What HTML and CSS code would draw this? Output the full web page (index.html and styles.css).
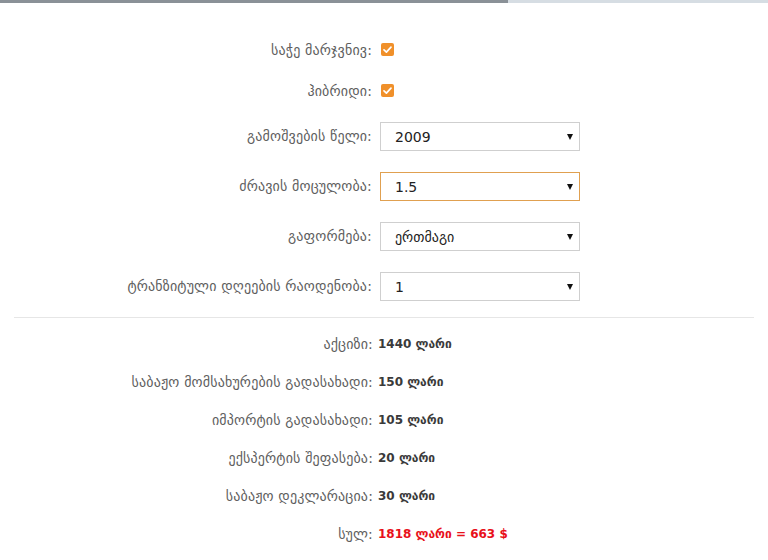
FILE: index.html
```html
<!DOCTYPE html>
<html lang="ka">
<head>
<meta charset="utf-8">
<link rel="stylesheet" href="styles.css">
</head>
<body>
<div class="topbar"><div class="topbar-fill"></div></div>
<div class="form">
  <div class="row row-check">
    <span class="label">საჭე მარჯვნივ:</span>
    <span class="check"><svg width="13" height="13" viewBox="0 0 13 13"><rect width="13" height="13" rx="2" fill="#f0902a"/><path d="M3 6.8 L5.4 9.1 L10 4.2" fill="none" stroke="#fff" stroke-width="1.7" stroke-linecap="round" stroke-linejoin="round"/></svg></span>
  </div>
  <div class="row row-check">
    <span class="label">ჰიბრიდი:</span>
    <span class="check"><svg width="13" height="13" viewBox="0 0 13 13"><rect width="13" height="13" rx="2" fill="#f0902a"/><path d="M3 6.8 L5.4 9.1 L10 4.2" fill="none" stroke="#fff" stroke-width="1.7" stroke-linecap="round" stroke-linejoin="round"/></svg></span>
  </div>
  <div class="row row-select">
    <span class="label">გამოშვების წელი:</span>
    <div class="select"><span>2009</span><i class="arrow"></i></div>
  </div>
  <div class="row row-select">
    <span class="label">ძრავის მოცულობა:</span>
    <div class="select focused"><span>1.5</span><i class="arrow"></i></div>
  </div>
  <div class="row row-select">
    <span class="label">გაფორმება:</span>
    <div class="select"><span>ერთმაგი</span><i class="arrow"></i></div>
  </div>
  <div class="row row-select">
    <span class="label">ტრანზიტული დღეების რაოდენობა:</span>
    <div class="select"><span>1</span><i class="arrow"></i></div>
  </div>
</div>
<hr class="divider">
<div class="results">
  <div class="row row-result"><span class="label rlabel">აქციზი:</span><span class="value">1440 ლარი</span></div>
  <div class="row row-result"><span class="label rlabel">საბაჟო მომსახურების გადასახადი:</span><span class="value">150 ლარი</span></div>
  <div class="row row-result"><span class="label rlabel">იმპორტის გადასახადი:</span><span class="value">105 ლარი</span></div>
  <div class="row row-result"><span class="label rlabel">ექსპერტის შეფასება:</span><span class="value">20 ლარი</span></div>
  <div class="row row-result"><span class="label rlabel">საბაჟო დეკლარაცია:</span><span class="value">30 ლარი</span></div>
  <div class="row row-result"><span class="label rlabel">სულ:</span><span class="value total">1818 ლარი = 663 $</span></div>
</div>
</body>
</html>
```

FILE: styles.css
```css
html, body {
  margin: 0;
  padding: 0;
  background: #fff;
}
body {
  font-family: "DejaVu Sans", "Noto Sans", sans-serif;
  font-size: 14px;
  color: #555;
}
.topbar {
  height: 3px;
  background: #d6dde3;
}
.topbar-fill {
  width: 508px;
  height: 3px;
  background: #8a9197;
}
.form {
  padding-top: 26px;
}
.row {
  display: flex;
  align-items: center;
}
.label {
  width: 372px;
  text-align: right;
  flex: none;
  color: #5e5e5e;
  letter-spacing: 0.15px;
}
.row-check {
  height: 41px;
}
.check {
  margin-left: 9px;
  display: flex;
}
.row-select {
  height: 50px;
}
.select {
  margin-left: 8px;
  border: 1px solid #cfcfcf;
  display: flex;
  align-items: center;
  justify-content: space-between;
  padding: 2px 6px 0 14px;
  box-sizing: border-box;
  width: 200px;
  height: 29px;
  font-size: 14px;
  color: #222;
}
.select.focused {
  border-color: #e0a050;
}
.arrow {
  width: 0;
  height: 0;
  border-left: 3.5px solid transparent;
  border-right: 3.5px solid transparent;
  border-top: 6px solid #111;
}
.divider {
  margin: 6px 14px 0 14px;
  border: 0;
  border-top: 1px solid #e6e6e6;
  height: 0;
}
.results {
  padding-top: 7px;
}
.row-result {
  height: 38px;
}
.rlabel {
  width: 373px;
}
.value {
  margin-left: 5px;
  font-size: 12px;
  font-weight: bold;
  color: #3a3a3a;
}
.value.total {
  color: #e8101a;
}
```
